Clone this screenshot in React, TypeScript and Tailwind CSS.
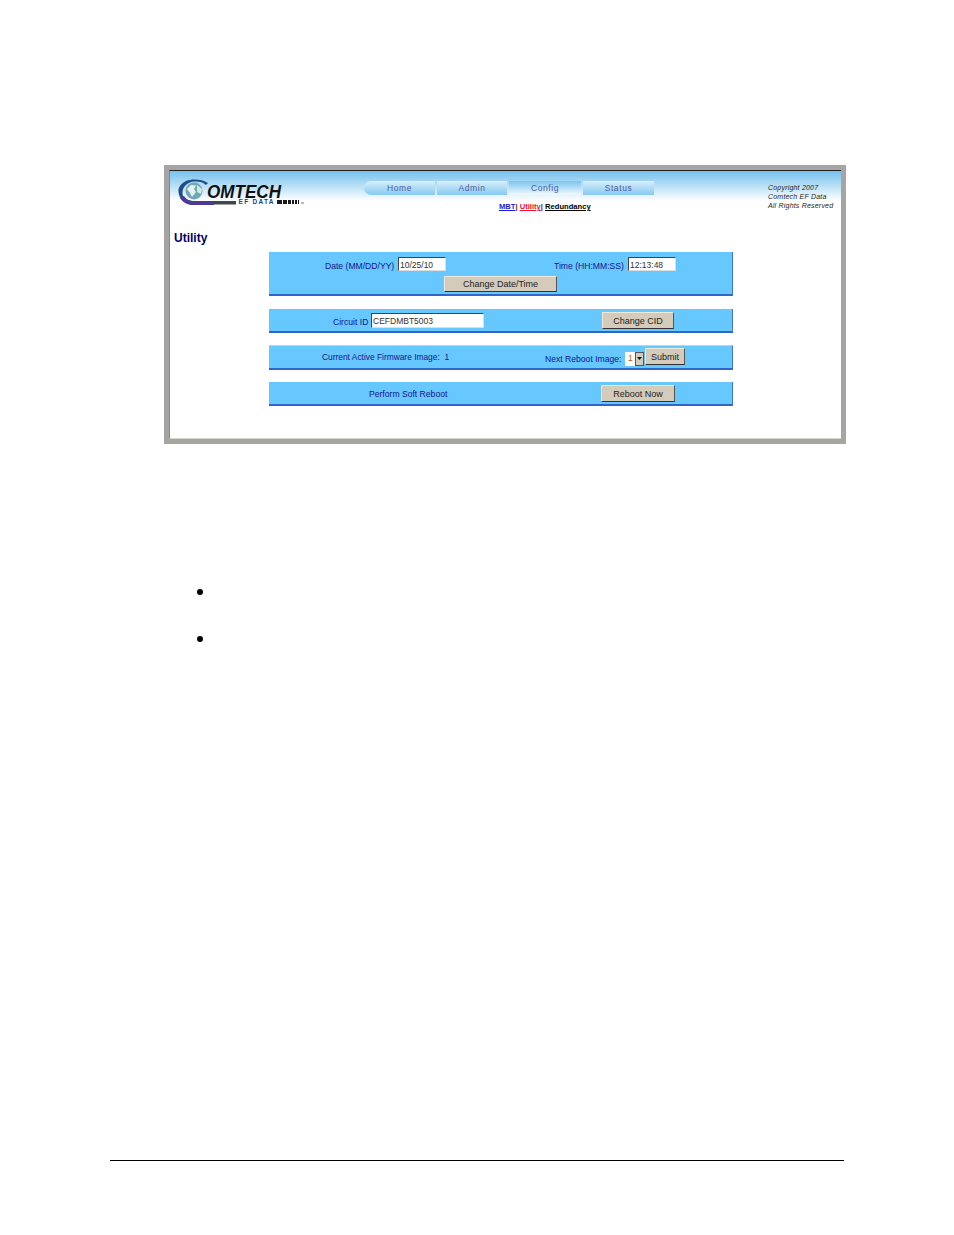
const sans = "font-['Liberation_Sans',Arial,sans-serif]";

function Logo() {
  return (
    <svg width="130" height="30" viewBox="0 0 130 30" className="shrink-0">
      {/* swoosh ring */}
      <path d="M30 6 C24 2 14 1.5 8 4 C2 7 0 11 0.5 15 C1 22 7 28 16 28 L36 28 L36 24 L16 24 C8 24 4 20 4.5 15 C5 9 10 5 16 4.5 C21 4 25 5 28 8 Z" fill="#1f4c8c" />
      <path d="M2 21 C5 25.5 10 28 16 28 L36 28 L36 24 L16 24 C11 24 8 22 6 19 Z" fill="#4b3b94" />
      <rect x="36" y="24" width="22" height="3.5" fill="#3f4650" />
      {/* globe */}
      <circle cx="16" cy="14" r="8.5" fill="#6ea9b5" />
      <path d="M9 12 L13 8 L18 8.5 L16 12 L18 15 L14 20 L12 16 Z" fill="#e8f0ee" />
      <path d="M19 8 L24 12 L23 17 L19 15 Z" fill="#d7e6e4" />
      {/* right bars */}
      <rect x="99" y="23" width="5" height="4" fill="#1a1a1a" />
      <rect x="105" y="23" width="4" height="4" fill="#1a1a1a" />
      <rect x="110" y="23" width="3" height="4" fill="#1a1a1a" />
      <rect x="114" y="23" width="2" height="4" fill="#1a1a1a" />
      <rect x="117" y="23" width="2" height="4" fill="#1a1a1a" />
      <rect x="120" y="23" width="1" height="4" fill="#1a1a1a" />
      <rect x="123" y="25.5" width="3" height="1" fill="#777" />
      <text x="29" y="21" fontFamily="Liberation Sans" fontSize="18" fontWeight="700" fontStyle="italic" fill="#111" textLength="74" lengthAdjust="spacingAndGlyphs">OMTECH</text>
      <text x="60.5" y="27" fontFamily="Liberation Sans" fontSize="6.5" fontWeight="700" fill="#1f3f8f" textLength="35">EF DATA</text>
    </svg>
  );
}

function Tab({ label, className }: { label: string; className: string }) {
  return (
    <div className={`${className} h-[14px] flex items-center justify-center text-[8.5px] tracking-[0.6px] text-[#4a5aa4]`}>
      {label}
    </div>
  );
}

function Btn({ label, className }: { label: string; className: string }) {
  return (
    <button className={`${className} bg-[#d4cbbb] border border-t-[#efe9dc] border-l-[#efe9dc] border-b-[#333] border-r-[#555] text-[9px] text-[#222] leading-none`}>
      {label}
    </button>
  );
}

function Field({ value, className }: { value: string; className: string }) {
  return (
    <div className={`${className} bg-white border border-t-[#444] border-l-[#444] border-b-[#ddd] border-r-[#ddd] text-[8.5px] text-[#333] leading-none pl-[1px] pt-[2px] flex items-center`}>
      {value}
    </div>
  );
}

function Panel({ className, children }: { className: string; children: React.ReactNode }) {
  return (
    <div className={`${className} ml-[99px] w-[464px] bg-[#66c8ff] border-b-2 border-b-[#2f66cc] border-r border-r-[#3f78cc] text-[8.6px] text-[#14148c]`}>
      {children}
    </div>
  );
}

export default function App() {
  return (
    <div className={`${sans} bg-white w-[954px] h-[1235px] overflow-hidden pt-[165px]`}>
      <div className="ml-[164px] w-[682px] h-[279px] border-[5px] border-[#a5a5a5]">
        <div className="h-full bg-white border-t border-t-[#222] border-l border-l-[#8c8674] border-b border-b-[#d8d4c8]">
          {/* header */}
          <div className="h-[55px] bg-[linear-gradient(#74c1ed,#ffffff_30px)] flex">
            <div className="ml-[8px] mt-[6px]">
              <Logo />
            </div>
            <div className="ml-[56px] mt-[10px] w-[300px]">
              <div className="flex gap-[2px]">
                <Tab label="Home" className="w-[71px] rounded-l-[7px] bg-[linear-gradient(#d8effc,#86c9f1)]" />
                <Tab label="Admin" className="w-[70px] bg-[linear-gradient(#d8effc,#86c9f1)]" />
                <Tab label="Config" className="w-[72px] bg-[linear-gradient(#7cc4ec,#f2faff)]" />
                <Tab label="Status" className="w-[71px] bg-[linear-gradient(#d8effc,#86c9f1)]" />
              </div>
              <div className="ml-[135px] mt-[8px] flex text-[7.6px] font-bold leading-none whitespace-nowrap">
                <span className="text-[#1a1ae0] underline">MBT</span>
                <span className="text-[#333]">|&nbsp;</span>
                <span className="text-[#ee1133] underline">Utility</span>
                <span className="text-[#333]">|&nbsp;</span>
                <span className="text-black underline">Redundancy</span>
              </div>
            </div>
            <div className="ml-[104px] mt-[12px] text-[7px] italic leading-[9px] tracking-[0.2px] text-[#222] whitespace-nowrap">
              <div>Copyright 2007</div>
              <div>Comtech EF Data</div>
              <div>All Rights Reserved</div>
            </div>
          </div>

          <h1 className="ml-[4px] mt-[5px] text-[12px] leading-[14px] font-bold text-[#000066]">Utility</h1>

          <Panel className="mt-[7px] h-[44px]">
            <div className="flex items-center pt-[5px] h-[19px]">
              <span className="ml-[56px] w-[73px] mt-[5px] whitespace-nowrap">Date (MM/DD/YY)</span>
              <Field value="10/25/10" className="w-[48px] h-[14px]" />
              <span className="ml-[108px] w-[74px] mt-[5px] whitespace-nowrap">Time (HH:MM:SS)</span>
              <Field value="12:13:48" className="w-[48px] h-[14px]" />
            </div>
            <Btn label="Change Date/Time" className="block ml-[175px] mt-[5px] w-[113px] h-[16px]" />
          </Panel>

          <Panel className="mt-[13px] h-[24px] flex items-center">
            <span className="ml-[64px] w-[38px] mt-[5px] whitespace-nowrap">Circuit ID</span>
            <Field value="CEFDMBT5003" className="w-[113px] h-[15px]" />
            <Btn label="Change CID" className="ml-[118px] w-[72px] h-[17px] pt-[2px]" />
          </Panel>

          <Panel className="mt-[12px] h-[25px] flex items-center border-t border-t-[#a5dcff]">
            <span className="ml-[53px] w-[223px] text-[8.4px] whitespace-nowrap">Current Active Firmware Image:&nbsp; 1</span>
            <span className="w-[80px] mt-[5px] whitespace-nowrap">Next Reboot Image:</span>
            <div className="w-[19px] h-[14px] mt-[3px] flex bg-white text-[8.5px] leading-none items-center text-[#a8640f]">
              <span className="w-[10px] pl-[3px]">1</span>
              <span className="w-[9px] h-full bg-[#d4cbbb] border border-[#555] flex items-center justify-center">
                <svg width="5" height="3" viewBox="0 0 5 3"><path d="M0 0h5L2.5 3z" fill="#111" /></svg>
              </span>
            </div>
            <Btn label="Submit" className="ml-[1px] w-[40px] h-[17px] -mt-[1px] pt-[2px]" />
          </Panel>

          <Panel className="mt-[12px] h-[24px] flex items-center">
            <span className="ml-[100px] w-[232px] mt-[2px] whitespace-nowrap">Perform Soft Reboot</span>
            <Btn label="Reboot Now" className="w-[74px] h-[17px] pt-[2px]" />
          </Panel>
        </div>
      </div>

      <ul className="ml-[197px] mt-[145px] flex flex-col gap-[41px]">
        <li className="w-[6px] h-[6px] rounded-full bg-black" />
        <li className="w-[6px] h-[6px] rounded-full bg-black" />
      </ul>

      <div className="ml-[110px] mt-[518px] w-[734px] h-px bg-black" />
    </div>
  );
}
